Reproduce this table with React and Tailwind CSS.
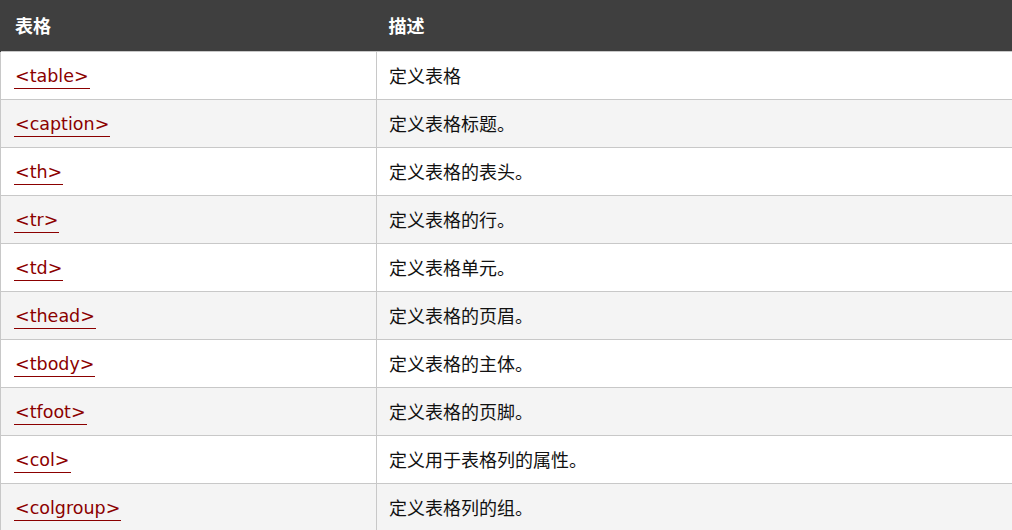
import React from 'react';

const rows = [
  ['<table>', '定义表格'],
  ['<caption>', '定义表格标题。'],
  ['<th>', '定义表格的表头。'],
  ['<tr>', '定义表格的行。'],
  ['<td>', '定义表格单元。'],
  ['<thead>', '定义表格的页眉。'],
  ['<tbody>', '定义表格的主体。'],
  ['<tfoot>', '定义表格的页脚。'],
  ['<col>', '定义用于表格列的属性。'],
  ['<colgroup>', '定义表格列的组。'],
];

const App = () => {
  return (
    <div className="w-[1012px] h-[530px] overflow-hidden bg-white" style={{ fontFamily: '"DejaVu Sans", Verdana, "Noto Sans CJK SC", sans-serif' }}>
      <table className="w-[1013px] border-collapse table-fixed">
        <colgroup>
          <col className="w-[376px]" />
          <col />
        </colgroup>
        <thead>
          <tr className="bg-[#3f3f3f] h-[51px]">
            <th className="text-left text-white font-bold text-[18px] pl-[14px] border-l border-[#3f3f3f]" style={{ fontFamily: '"Noto Sans CJK SC", sans-serif' }}>表格</th>
            <th className="text-left text-white font-bold text-[18px] pl-[12px]" style={{ fontFamily: '"Noto Sans CJK SC", sans-serif' }}>描述</th>
          </tr>
        </thead>
        <tbody>
          {rows.map(([tag, desc], i) => (
            <tr key={tag} className={`h-[48px] ${i % 2 === 1 ? 'bg-[#f4f4f4]' : 'bg-white'}`}>
              <td className="border border-[#c8c8c8] pl-[13px] align-middle">
                <a className="inline-block text-[#8b0000] text-[17.5px] leading-[21px] border-b border-[#8b0000] pb-[1px] mt-[4px] px-[1px]">{tag}</a>
              </td>
              <td className="border border-[#c8c8c8] pl-[12px] text-[18px] text-[#111] align-middle" style={{ fontFamily: '"Noto Sans CJK SC", sans-serif' }}>{desc}</td>
            </tr>
          ))}
        </tbody>
      </table>
    </div>
  );
};

export default App;
